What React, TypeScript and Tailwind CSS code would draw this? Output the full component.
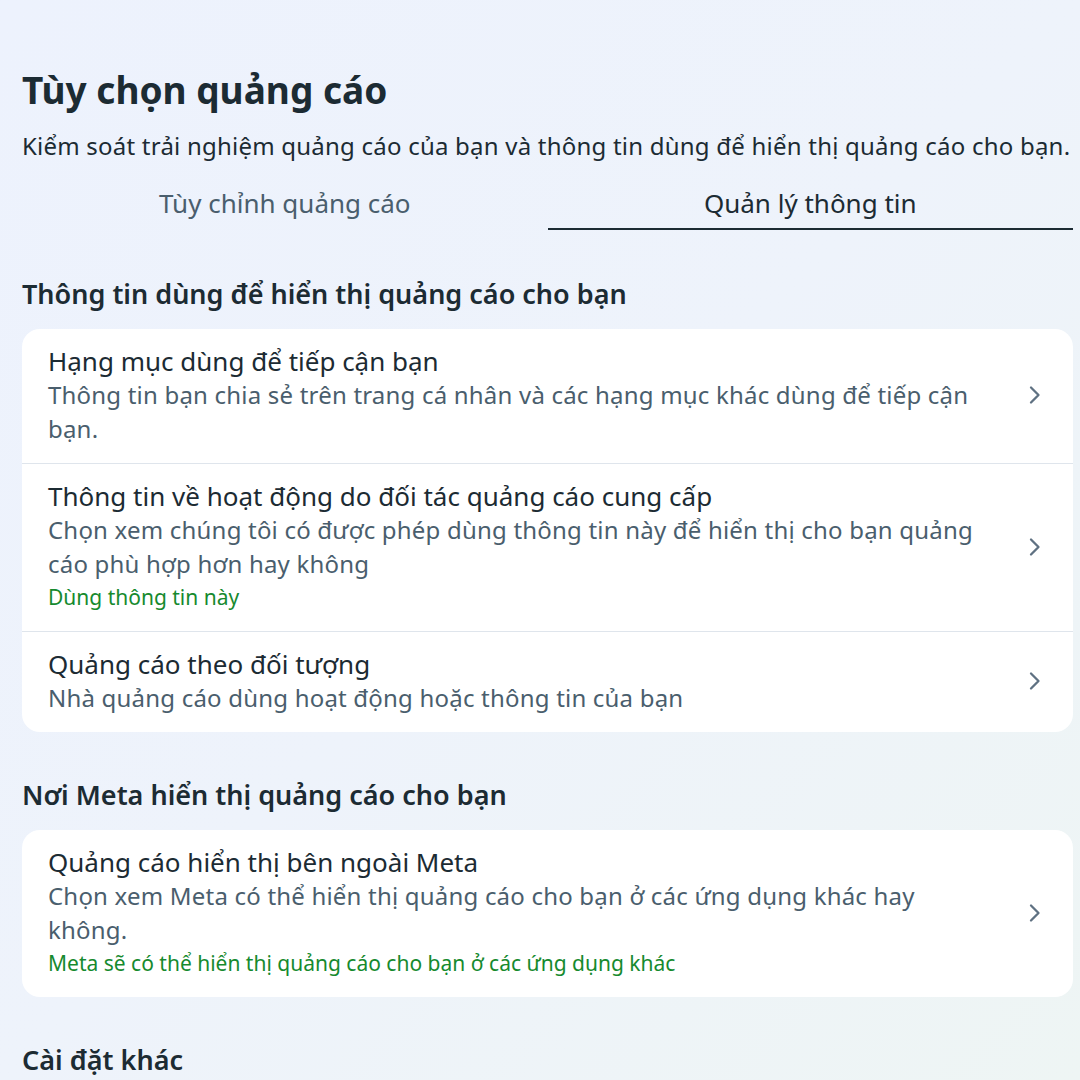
import React from "react";

const Chevron = () => (
  <svg width="14" height="20" viewBox="0 0 14 20" fill="none">
    <path d="M3 2.5 L10.5 10 L3 17.5" stroke="#5f7182" strokeWidth="2.3" strokeLinecap="round" strokeLinejoin="round" />
  </svg>
);

type Row = { title: string; desc: string; status?: string };

const RowItem = ({ r, last }: { r: Row; last: boolean }) => (
  <div className={`flex items-center pl-[26px] pr-[26px] pt-[15px] pb-[17px] ${last ? "" : "border-b border-[#dfe5ec]"}`}>
    <div className="flex-1 min-w-0 pr-[30px]">
      <div className="text-[26px] leading-[34px] text-[#1c2b33]">{r.title}</div>
      <div className="text-[24px] leading-[34px] text-[#4a5e6d] tracking-[0.2px]">{r.desc}</div>
      {r.status && <div className="text-[21px] leading-[33px] text-[#168a2e]">{r.status}</div>}
    </div>
    <div className="w-[24px] flex justify-center">
      <Chevron />
    </div>
  </div>
);

const Card = ({ rows }: { rows: Row[] }) => (
  <div className="bg-white rounded-[18px] overflow-hidden">
    {rows.map((r, i) => (
      <RowItem key={i} r={r} last={i === rows.length - 1} />
    ))}
  </div>
);

export default function App() {
  return (
    <div
      className="w-[1080px] h-[1080px] overflow-hidden bg-gradient-to-br from-[#edf2fd] via-[#eef3fb] to-[#eef5f4] px-[22px] pt-[68px]"
      style={{ fontFamily: '"Noto Sans", "Open Sans", sans-serif' }}
    >
      <div className="w-[1051px]">
        <h1 className="text-[37px] leading-[44px] font-bold text-[#1c2b33]">Tùy chọn quảng cáo</h1>
        <p className="mt-[18px] text-[24px] leading-[32px] text-[#1c2b33] whitespace-nowrap tracking-[0.22px]">
          Kiểm soát trải nghiệm quảng cáo của bạn và thông tin dùng để hiển thị quảng cáo cho bạn.
        </p>
        <div className="mt-[25px] flex">
          <div className="flex-1 text-center text-[26px] leading-[32px] text-[#4a5e6d] pb-[11px]">Tùy chỉnh quảng cáo</div>
          <div className="flex-1 text-center text-[26px] leading-[32px] text-[#1c2b33] pb-[9px] border-b-2 border-[#1c2b33]">
            Quản lý thông tin
          </div>
        </div>
        <h2 className="mt-[48px] text-[27px] leading-[32px] font-semibold text-[#1c2b33]">
          Thông tin dùng để hiển thị quảng cáo cho bạn
        </h2>
        <div className="mt-[19px]">
          <Card
            rows={[
              {
                title: "Hạng mục dùng để tiếp cận bạn",
                desc: "Thông tin bạn chia sẻ trên trang cá nhân và các hạng mục khác dùng để tiếp cận bạn.",
              },
              {
                title: "Thông tin về hoạt động do đối tác quảng cáo cung cấp",
                desc: "Chọn xem chúng tôi có được phép dùng thông tin này để hiển thị cho bạn quảng cáo phù hợp hơn hay không",
                status: "Dùng thông tin này",
              },
              {
                title: "Quảng cáo theo đối tượng",
                desc: "Nhà quảng cáo dùng hoạt động hoặc thông tin của bạn",
              },
            ]}
          />
        </div>
        <h2 className="mt-[47px] text-[27px] leading-[32px] font-semibold text-[#1c2b33]">Nơi Meta hiển thị quảng cáo cho bạn</h2>
        <div className="mt-[19px]">
          <Card
            rows={[
              {
                title: "Quảng cáo hiển thị bên ngoài Meta",
                desc: "Chọn xem Meta có thể hiển thị quảng cáo cho bạn ở các ứng dụng khác hay không.",
                status: "Meta sẽ có thể hiển thị quảng cáo cho bạn ở các ứng dụng khác",
              },
            ]}
          />
        </div>
        <h2 className="mt-[47px] text-[27px] leading-[32px] font-semibold text-[#1c2b33]">Cài đặt khác</h2>
      </div>
    </div>
  );
}
